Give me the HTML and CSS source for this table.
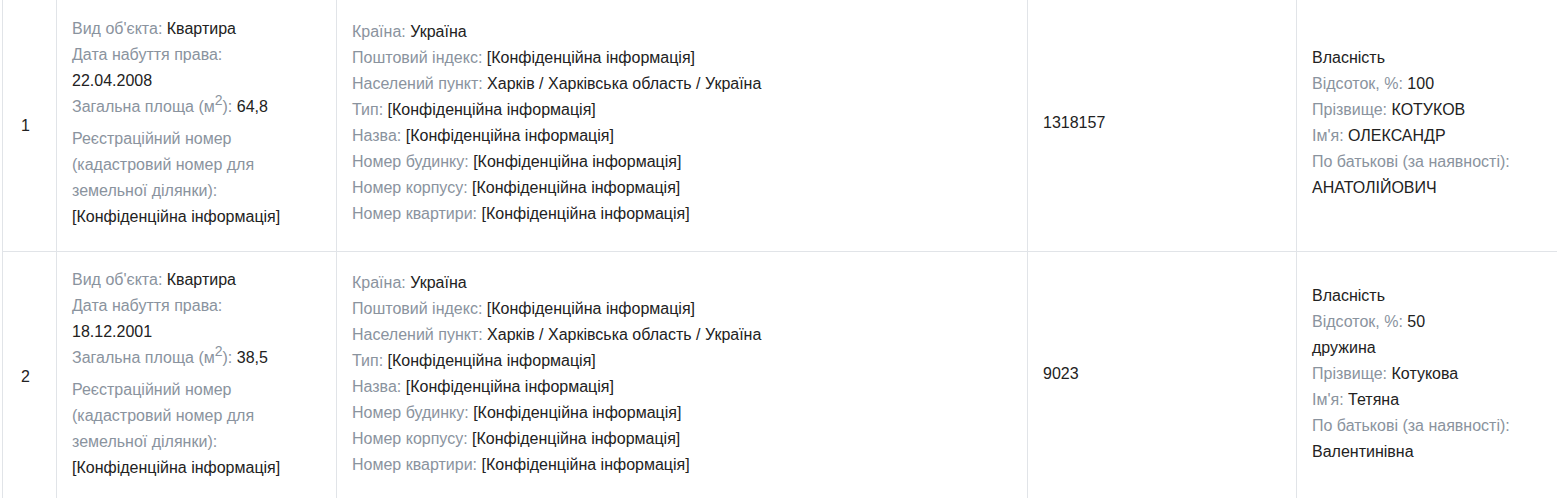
FILE: index.html
```html
<!DOCTYPE html>
<html lang="uk">
<head>
<meta charset="utf-8">
<title>Об'єкти нерухомості</title>
<link rel="stylesheet" href="styles.css">
</head>
<body>
<table class="grid">
  <colgroup>
    <col class="c-num">
    <col class="c-obj">
    <col class="c-addr">
    <col class="c-cost">
    <col class="c-own">
  </colgroup>
  <tbody>
    <tr>
      <td class="num">1</td>
      <td>
        <div class="blk">
          <div><span class="lbl">Вид об'єкта:</span> Квартира</div>
          <div><span class="lbl">Дата набуття права:</span></div>
          <div>22.04.2008</div>
          <div><span class="lbl">Загальна площа (м<sup>2</sup>):</span> 64,8</div>
        </div>
        <div class="blk">
          <div class="lbl">Реєстраційний номер (кадастровий номер для земельної ділянки):</div>
          <div>[Конфіденційна інформація]</div>
        </div>
      </td>
      <td>
        <div class="blk">
          <div><span class="lbl">Країна:</span> Україна</div>
          <div><span class="lbl">Поштовий індекс:</span> [Конфіденційна інформація]</div>
          <div><span class="lbl">Населений пункт:</span> Харків / Харківська область / Україна</div>
          <div><span class="lbl">Тип:</span> [Конфіденційна інформація]</div>
          <div><span class="lbl">Назва:</span> [Конфіденційна інформація]</div>
          <div><span class="lbl">Номер будинку:</span> [Конфіденційна інформація]</div>
          <div><span class="lbl">Номер корпусу:</span> [Конфіденційна інформація]</div>
          <div><span class="lbl">Номер квартири:</span> [Конфіденційна інформація]</div>
        </div>
      </td>
      <td><div class="blk">1318157</div></td>
      <td>
        <div class="blk">
          <div>Власність</div>
          <div><span class="lbl">Відсоток, %:</span> 100</div>
          <div><span class="lbl">Прізвище:</span> КОТУКОВ</div>
          <div><span class="lbl">Ім'я:</span> ОЛЕКСАНДР</div>
          <div><span class="lbl">По батькові (за наявності):</span></div>
          <div>АНАТОЛІЙОВИЧ</div>
        </div>
      </td>
    </tr>
    <tr>
      <td class="num">2</td>
      <td>
        <div class="blk">
          <div><span class="lbl">Вид об'єкта:</span> Квартира</div>
          <div><span class="lbl">Дата набуття права:</span></div>
          <div>18.12.2001</div>
          <div><span class="lbl">Загальна площа (м<sup>2</sup>):</span> 38,5</div>
        </div>
        <div class="blk">
          <div class="lbl">Реєстраційний номер (кадастровий номер для земельної ділянки):</div>
          <div>[Конфіденційна інформація]</div>
        </div>
      </td>
      <td>
        <div class="blk">
          <div><span class="lbl">Країна:</span> Україна</div>
          <div><span class="lbl">Поштовий індекс:</span> [Конфіденційна інформація]</div>
          <div><span class="lbl">Населений пункт:</span> Харків / Харківська область / Україна</div>
          <div><span class="lbl">Тип:</span> [Конфіденційна інформація]</div>
          <div><span class="lbl">Назва:</span> [Конфіденційна інформація]</div>
          <div><span class="lbl">Номер будинку:</span> [Конфіденційна інформація]</div>
          <div><span class="lbl">Номер корпусу:</span> [Конфіденційна інформація]</div>
          <div><span class="lbl">Номер квартири:</span> [Конфіденційна інформація]</div>
        </div>
      </td>
      <td><div class="blk">9023</div></td>
      <td>
        <div class="blk">
          <div>Власність</div>
          <div><span class="lbl">Відсоток, %:</span> 50</div>
          <div>дружина</div>
          <div><span class="lbl">Прізвище:</span> Котукова</div>
          <div><span class="lbl">Ім'я:</span> Тетяна</div>
          <div><span class="lbl">По батькові (за наявності):</span></div>
          <div>Валентинівна</div>
        </div>
      </td>
    </tr>
  </tbody>
</table>
</body>
</html>
```

FILE: styles.css
```css
html, body {
  margin: 0;
  padding: 0;
  background: #ffffff;
}

body {
  font-family: "Liberation Sans", Arial, sans-serif;
  font-size: 16px;
  line-height: 26px;
  color: #222222;
}

.grid {
  border-collapse: collapse;
  table-layout: fixed;
  width: 1600px;
  margin: 0 0 0 2px;
}

.c-num { width: 54px; }
.c-obj { width: 280px; }
.c-addr { width: 691px; }
.c-cost { width: 269px; }
.c-own { width: auto; }

.grid td {
  border: 1px solid #e1e4e8;
  padding: 15px 15px;
  vertical-align: middle;
  text-align: left;
}

.grid tr:first-child td {
  border-top-color: transparent;
}

.grid td.num {
  padding-left: 18px;
}

.blk {
  margin-bottom: 6px;
}

.lbl {
  color: #8a939e;
}

sup {
  font-size: 14px;
  line-height: 0;
  vertical-align: 7px;
}
```
